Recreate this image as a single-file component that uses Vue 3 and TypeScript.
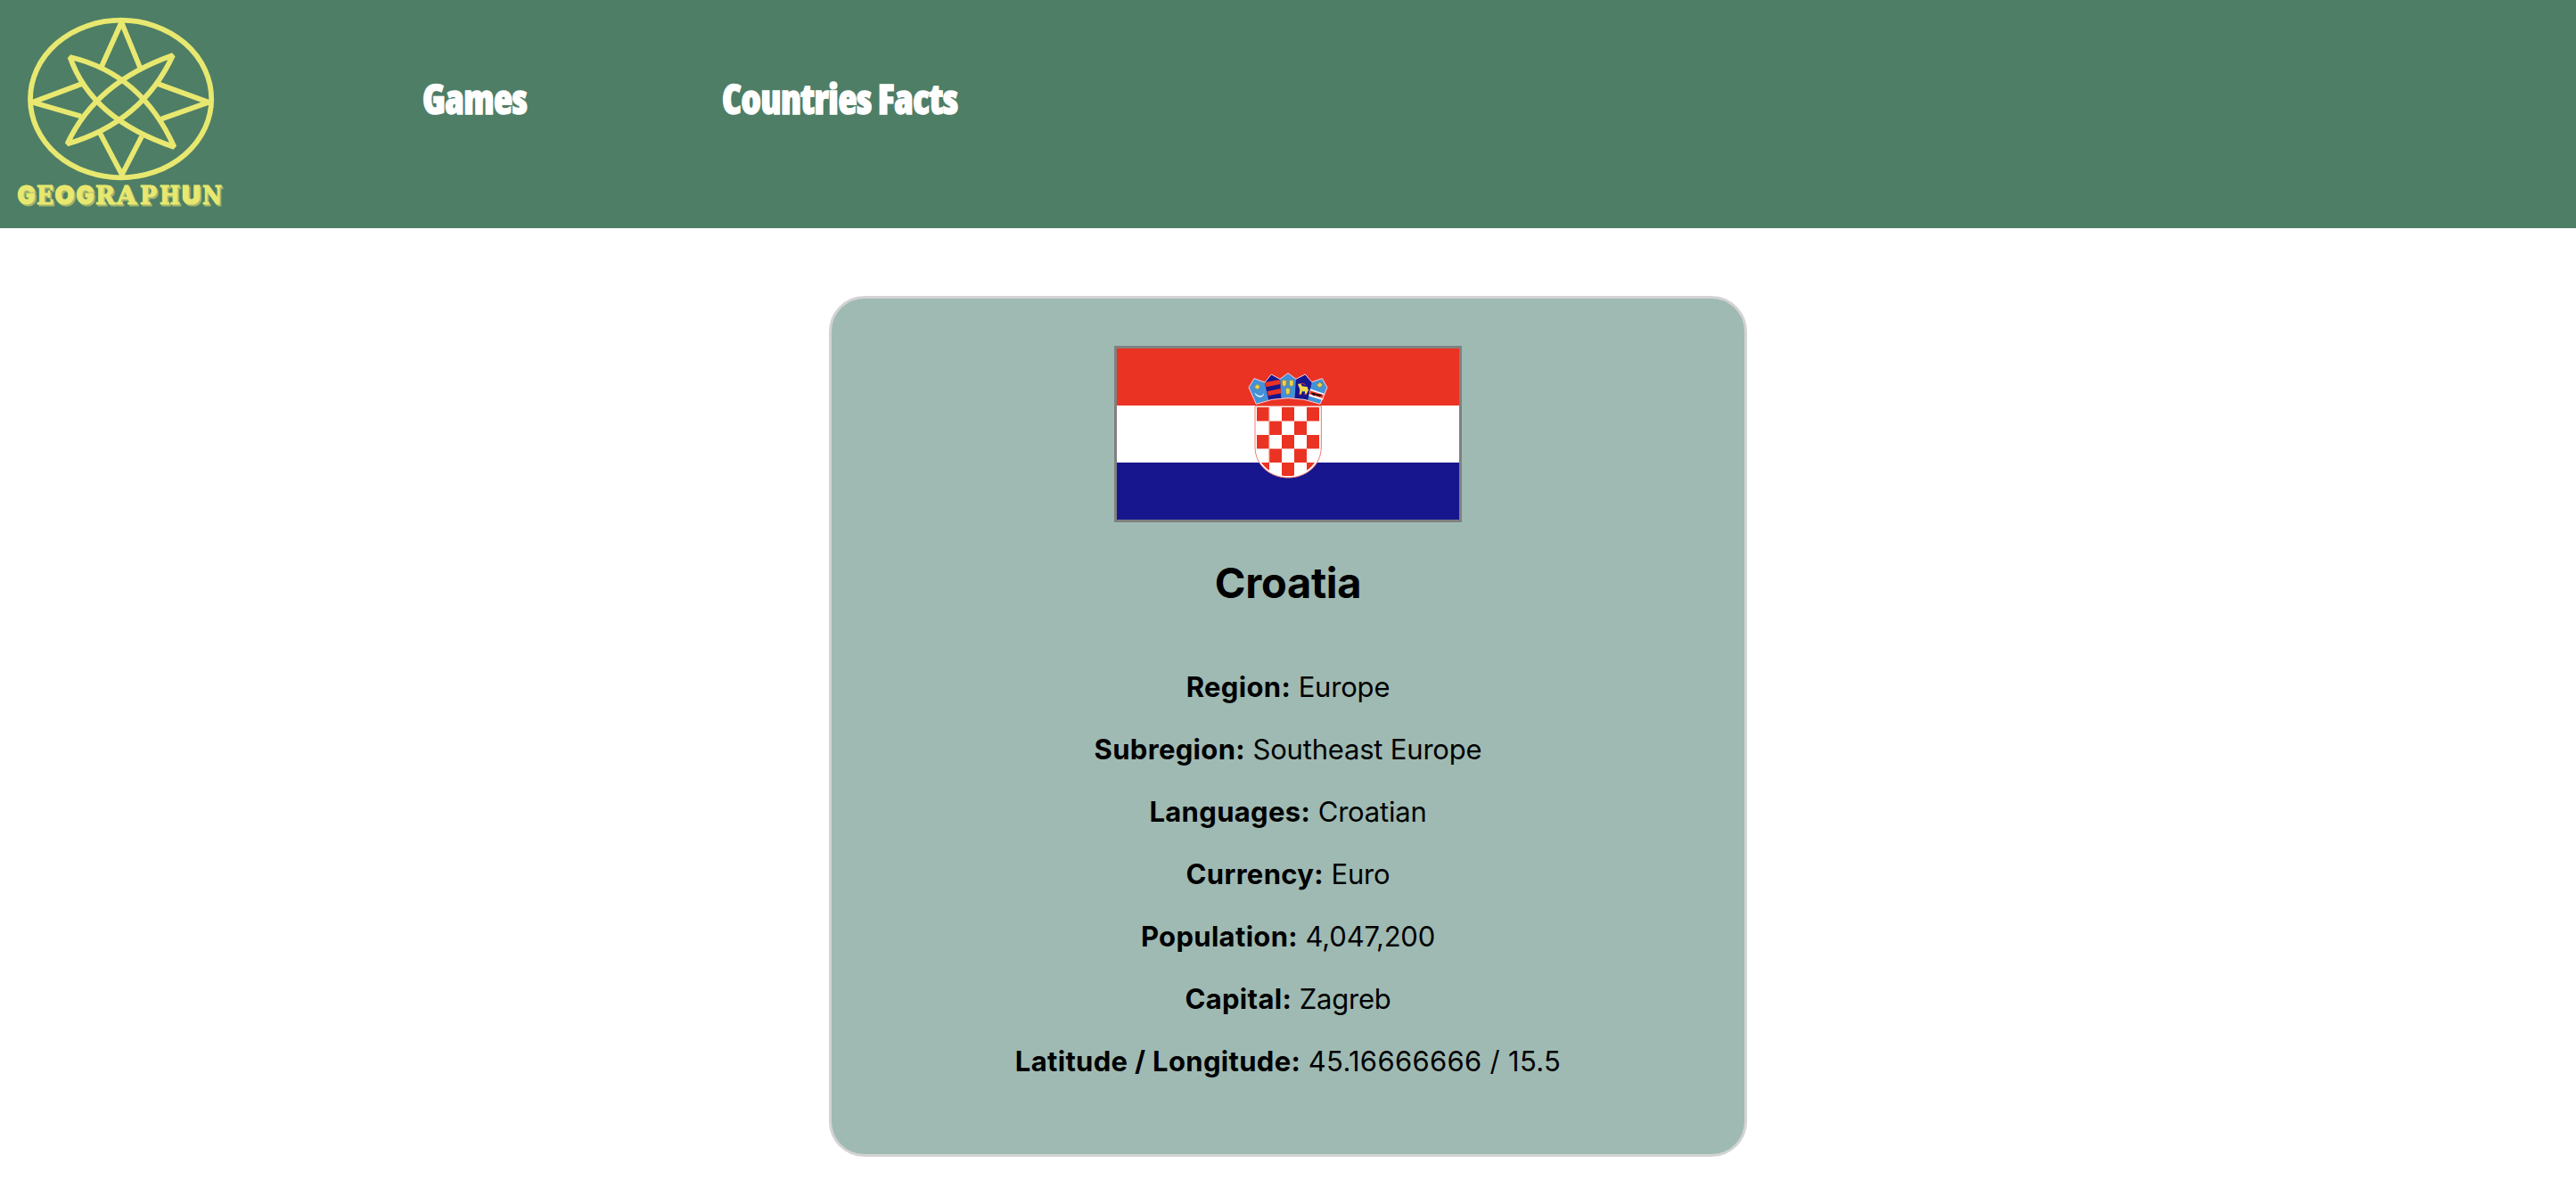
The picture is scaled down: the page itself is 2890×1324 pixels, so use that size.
<script setup lang="ts">
interface Fact {
  label: string
  value: string
  numeric?: boolean
}

const country = 'Croatia'
const links: string[] = ['Games', 'Countries Facts']

const facts: Fact[] = [
  { label: 'Region:', value: 'Europe' },
  { label: 'Subregion:', value: 'Southeast Europe' },
  { label: 'Languages:', value: 'Croatian' },
  { label: 'Currency:', value: 'Euro' },
  { label: 'Population:', value: '4,047,200' },
  { label: 'Capital:', value: 'Zagreb' },
  { label: 'Latitude / Longitude:', value: '45.16666666 / 15.5', numeric: true },
]

// Red fields of the 5x5 chequered shield
const cols = [510, 552, 594, 636, 678]
const rows = [231, 278, 324, 371, 417]
const checks = rows.flatMap((y, r) =>
  cols.filter((_, c) => (r + c) % 2 === 0).map((x) => ({ x, y })),
)

// Wordmark letters: left edge and drawn width
const letters = [
  { ch: 'G', x: 19.5, w: 20, serif: false },
  { ch: 'E', x: 41, w: 19, serif: true },
  { ch: 'O', x: 61.5, w: 22, serif: false },
  { ch: 'G', x: 85.5, w: 20, serif: false },
  { ch: 'R', x: 107, w: 22, serif: true },
  { ch: 'A', x: 131, w: 22, serif: true },
  { ch: 'P', x: 157, w: 19, serif: true },
  { ch: 'H', x: 179, w: 23, serif: true },
  { ch: 'U', x: 204, w: 21, serif: false },
  { ch: 'N', x: 227, w: 22, serif: true },
]
</script>

<template>
  <div class="page">
    <header class="header">
      <svg class="logo" viewBox="0 0 270 256" width="270" height="256">
        <g class="lines">
          <ellipse cx="135.6" cy="111" rx="101.6" ry="88.3" />
          <path d="M114 74.5L136.3 25L157 75.5" />
          <path d="M92 94L36.5 114.7L91 130.5" />
          <path d="M177 94L234 114.7L181 133.5" />
          <path d="M112 149L136.8 196L159 153" />
          <path d="M78.500 64Q159 83 195.500 165Q103 134 78.500 64Z" />
          <path d="M194 62Q107.500 92 75.500 161.500Q159.500 137 194 62Z" />
        </g>
        <g class="wordmark shadow">
          <text
            v-for="l in letters" :key="l.x" :class="{ serif: l.serif }"
            :x="l.x + 1.7" y="230.700" :textLength="l.w" lengthAdjust="spacingAndGlyphs"
          >{{ l.ch }}</text>
        </g>
        <g class="wordmark">
          <text
            v-for="l in letters" :key="l.x" :class="{ serif: l.serif }"
            :x="l.x" y="228.500" :textLength="l.w" lengthAdjust="spacingAndGlyphs"
          >{{ l.ch }}</text>
        </g>
      </svg>
      <nav class="nav">
        <a v-for="l in links" :key="l" class="link">{{ l }}</a>
      </nav>
    </header>

    <main class="card">
      <svg class="flag" viewBox="39 33 1152 576" preserveAspectRatio="none">
        <defs>
          <clipPath id="shield">
            <path d="M509 230H721V364C721 424 668 463 615 463S509 424 509 364Z" />
          </clipPath>
        </defs>
        <rect x="39" y="33" width="1152" height="192" fill="#eb3323" />
        <rect x="39" y="225" width="1152" height="192" fill="#fff" />
        <rect x="39" y="417" width="1152" height="192" fill="#17168e" />
        <path
          d="M504 227H727V364C727 428 674 468 615.500 468S504 428 504 364Z"
          fill="#fff" stroke="#f07a70" stroke-width="3"
        />
        <g clip-path="url(#shield)" fill="#eb3323">
          <rect v-for="(c, i) in checks" :key="i" :x="c.x" :y="c.y" width="42" height="46" />
          <g fill="#f5a39d">
            <rect x="510" y="276" width="210" height="3" />
            <rect x="510" y="369" width="210" height="3" />
            <rect x="550" y="231" width="3" height="186" />
          </g>
        </g>
        <g fill="#4491d9">
          <path d="M483 164L501 134L537 147L550 206L508 220Z" />
          <path d="M588 136L615 116L642 136L638 200H592Z" />
          <path d="M694 147L730 134L747 164L723 220L681 206Z" />
        </g>
        <g fill="#17168e">
          <path d="M536 146L559 120L588 136L592 201L550 206Z" />
          <path d="M642 136L673 120L695 146L682 206L638 201Z" />
        </g>
        <g fill="#eb3323">
          <path d="M536 147L587 138L589 153L541 163Z" />
          <path d="M545 177L590 168L591 184L549 192Z" />
        </g>
        <path d="M690 169L739 186L732 207L685 193Z" fill="#fff" />
        <path d="M690 175L736 190L732 201L687 187Z" fill="#eb3323" />
        <path d="M692 182L702 182L710 186L730 188L722 194L708 190L700 191Z" fill="#200d10" />
        <path d="M502 181Q508 199 523 197Q534 195 534 183Q530 193 520 192Q510 191 502 181Z" fill="#e6f0fa" />
        <g fill="#ecd24c" stroke="#8a7a2c" stroke-width="2">
          <path d="M512 152L516 157L521 159L519 166L512 171L505 167L502 160L507 158Z" />
          <path d="M722 146L726 151L732 151L729 160L722 164L715 161L712 152L718 151Z" />
          <path d="M595 142L602 139L610 142L609 157L602 161L596 157Z" />
          <path d="M619 142L626 139L634 142L633 157L626 161L620 157Z" />
          <path d="M607 169L614 166L622 169L621 184L614 189L608 184Z" />
        </g>
        <path
          d="M648 153L658 151L662 160L680 162L684 173L677 187H672L672 178L662 178L660 188H653L655 171Z"
          fill="#f0d850"
        />
        <path d="M658 152Q665 149 674 155M653 187H660M670 187H677" stroke="#eb3323" stroke-width="3" fill="none" />
        <path
          d="M483 164L501 134L537 147L559 120L588 136L615 116L642 136L673 120L695 146L730 134L747 164L723 220Q615 180 508 220Z"
          fill="none" stroke="#f6d3dc" stroke-width="3"
        />
      </svg>

      <h1 class="name">{{ country }}</h1>

      <div class="facts">
        <p v-for="f in facts" :key="f.label" class="fact">
          <strong>{{ f.label }}</strong> <span :class="{ numeric: f.numeric }">{{ f.value }}</span>
        </p>
      </div>
    </main>
  </div>
</template>

<style>
body {
  background: #fff;
}
</style>

<style scoped>
.page {
  height: 1324px;
  overflow: hidden;
  font-family: Inter, sans-serif;
  color: #000;
}

.header {
  display: flex;
  align-items: flex-start;
  height: 256px;
  background: #4e7e65;
}

.logo {
  flex: none;
}

.lines {
  fill: none;
  stroke: #e8e870;
  stroke-width: 5.8;
  stroke-linejoin: bevel;
}

.wordmark {
  font: 900 28px Inter, sans-serif;
  fill: #e8e870;
  stroke: #e8e870;
  stroke-width: 1.2;
}

.wordmark .serif {
  font: bold 28px "DejaVu Serif", serif;
}

.wordmark.shadow {
  fill: #a3b56b;
  stroke: #a3b56b;
}

.nav {
  display: flex;
  padding: 80px 0 0 204px;
}

.link {
  width: 336px;
  font: 800 46px/60px "Open Sans", sans-serif;
  font-stretch: 75%;
  letter-spacing: -0.45px;
  color: #fff;
  white-space: nowrap;
  -webkit-text-stroke: 1.5px #fff;
  transform: scaleX(0.943);
  transform-origin: left;
}

.card {
  display: flex;
  flex-direction: column;
  align-items: center;
  box-sizing: border-box;
  width: 1030px;
  height: 966px;
  margin: 76px auto 0;
  padding-top: 53px;
  background: #9fbab3;
  border: 3px solid #d3d3d3;
  border-radius: 40px;
}

.flag {
  flex: none;
  width: 384px;
  height: 192px;
  border: 3px solid #808080;
}

.name {
  margin: 39px 0 69px;
  font-size: 47px;
  line-height: 58px;
  font-weight: 700;
  letter-spacing: -0.3px;
}

.facts {
  display: flex;
  flex-direction: column;
  gap: 32px;
  text-align: center;
}

.fact {
  margin: 0;
  font-size: 31px;
  line-height: 38px;
  letter-spacing: -0.2px;
  white-space: nowrap;
}

.fact strong {
  font-weight: 700;
  letter-spacing: 0.33px;
}

.fact .numeric {
  letter-spacing: 0.3px;
}
</style>
